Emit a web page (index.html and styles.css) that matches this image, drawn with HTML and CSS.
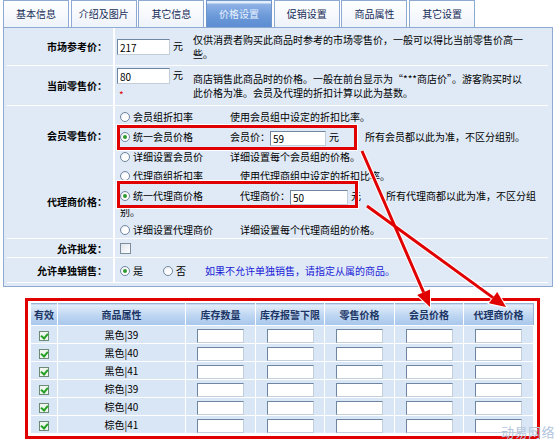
FILE: index.html
```html
<!DOCTYPE html>
<html lang="zh-CN">
<head>
<meta charset="utf-8">
<title>商品价格设置</title>
<link rel="stylesheet" href="styles.css">
</head>
<body>
<div class="page">
  <ul class="tabs">
    <li class="tab">基本信息</li>
    <li class="tab">介绍及图片</li>
    <li class="tab">其它信息</li>
    <li class="tab active">价格设置</li>
    <li class="tab">促销设置</li>
    <li class="tab">商品属性</li>
    <li class="tab">其它设置</li>
  </ul>

  <div class="panel">
    <div class="row r-market">
      <div class="lbl">市场参考价：</div>
      <div class="val">
        <div class="price"><input class="field f-main" value="217"><span class="unit">元</span></div>
        <p class="desc">仅供消费者购买此商品时参考的市场零售价，一般可以得比当前零售价高一些。</p>
      </div>
    </div>

    <div class="row r-retail">
      <div class="lbl">当前零售价：</div>
      <div class="val">
        <div class="price top">
          <div><input class="field f-main" value="80"><span class="unit">元</span></div>
          <div class="req">*</div>
        </div>
        <p class="desc">商店销售此商品时的价格。一般在前台显示为“***商店价”。游客购买时以此价格为准。会员及代理的折扣计算以此为基数。</p>
      </div>
    </div>

    <div class="row r-member">
      <div class="lbl">会员零售价：</div>
      <div class="val opts">
        <div class="opt"><span class="radio"></span><span class="opt-name w-m">会员组折扣率</span>使用会员组中设定的折扣比率。</div>
        <div class="opt unify"><span class="radio on"></span><span class="opt-name w-m">统一会员价格</span>会员价：<input class="field f-member" value="59"><span class="unit">元</span><span class="note">所有会员都以此为准，不区分组别。</span></div>
        <div class="opt"><span class="radio"></span><span class="opt-name w-m">详细设置会员价</span>详细设置每个会员组的价格。</div>
      </div>
    </div>

    <div class="row r-agent">
      <div class="lbl">代理商价格：</div>
      <div class="val opts">
        <div class="opt"><span class="radio"></span><span class="opt-name w-a">代理商组折扣率</span>使用代理商组中设定的折扣比率。</div>
        <div class="opt unify agent"><span class="radio on"></span><span class="opt-name w-a">统一代理商价格</span>代理商价：<input class="field f-agent" value="50"><span class="unit">元</span><span class="note wide">所有代理商都以此为准，不区分组别。</span></div>
        <div class="opt"><span class="radio"></span><span class="opt-name w-a">详细设置代理商价</span>详细设置每个代理商组的价格。</div>
      </div>
    </div>

    <div class="row r-wholesale">
      <div class="lbl">允许批发：</div>
      <div class="val inline"><span class="check"></span></div>
    </div>

    <div class="row r-single">
      <div class="lbl">允许单独销售：</div>
      <div class="val inline">
        <span class="choice"><span class="radio on"></span>是</span>
        <span class="choice"><span class="radio"></span>否</span>
        <span class="hint">如果不允许单独销售，请指定从属的商品。</span>
      </div>
    </div>
  </div>

  <div class="sku">
    <table class="sku-table">
      <colgroup>
        <col class="c-valid"><col class="c-attr"><col class="c-num"><col class="c-num2"><col class="c-num"><col class="c-num2"><col class="c-num">
      </colgroup>
      <thead>
        <tr><th>有效</th><th>商品属性</th><th>库存数量</th><th>库存报警下限</th><th>零售价格</th><th>会员价格</th><th>代理商价格</th></tr>
      </thead>
      <tbody>
        <tr><td><span class="check on"></span></td><td>黑色|39</td><td><input class="field cell"></td><td><input class="field cell"></td><td><input class="field cell"></td><td><input class="field cell"></td><td><input class="field cell"></td></tr>
        <tr><td><span class="check on"></span></td><td>黑色|40</td><td><input class="field cell"></td><td><input class="field cell"></td><td><input class="field cell"></td><td><input class="field cell"></td><td><input class="field cell"></td></tr>
        <tr><td><span class="check on"></span></td><td>黑色|41</td><td><input class="field cell"></td><td><input class="field cell"></td><td><input class="field cell"></td><td><input class="field cell"></td><td><input class="field cell"></td></tr>
        <tr><td><span class="check on"></span></td><td>棕色|39</td><td><input class="field cell"></td><td><input class="field cell"></td><td><input class="field cell"></td><td><input class="field cell"></td><td><input class="field cell"></td></tr>
        <tr><td><span class="check on"></span></td><td>棕色|40</td><td><input class="field cell"></td><td><input class="field cell"></td><td><input class="field cell"></td><td><input class="field cell"></td><td><input class="field cell"></td></tr>
        <tr><td><span class="check on"></span></td><td>棕色|41</td><td><input class="field cell"></td><td><input class="field cell"></td><td><input class="field cell"></td><td><input class="field cell"></td><td><input class="field cell"></td></tr>
      </tbody>
    </table>
  </div>

  <!-- callouts: red frames around the unified price options, arrows down to the matching columns -->
  <div class="mark mark-member"></div>
  <div class="mark mark-agent"></div>
  <svg class="arrows" width="556" height="439" viewBox="0 0 556 439">
    <g class="halo">
      <line x1="362" y1="151" x2="423.6" y2="292.3"/>
      <line x1="367" y1="206" x2="493" y2="297.6"/>
      <polygon points="430,307 417.2,295.1 430,289.5"/>
      <polygon points="506,307 488.9,303.3 497.2,291.9"/>
    </g>
    <g class="ink">
      <line x1="362" y1="151" x2="423.6" y2="292.3"/>
      <line x1="367" y1="206" x2="493" y2="297.6"/>
      <polygon points="430,307 417.2,295.1 430,289.5"/>
      <polygon points="506,307 488.9,303.3 497.2,291.9"/>
    </g>
  </svg>
  <div class="brand">动易网络</div>
</div>
</body>
</html>
```

FILE: styles.css
```css
* { box-sizing: border-box; }

html, body { margin: 0; padding: 0; background: #fff; }

body {
  font-family: "Noto Sans CJK SC", "Liberation Sans", sans-serif;
  font-size: 10px;
  color: #000;
}

.page {
  position: relative;
  width: 556px;
  height: 439px;
  overflow: hidden;
}

/* ---------- tab strip ---------- */
.tabs {
  display: flex;
  gap: 1.7px;
  height: 27px;
  margin: 0;
  padding: 0 0 0 3px;
  list-style: none;
}

.tab {
  width: 66px;
  height: 27px;
  border: 1px solid #8eaad2;
  border-bottom: 0;
  background: linear-gradient(#ffffff, #eef3fa);
  color: #162c58;
  text-align: center;
  line-height: 26px;
}

.tab.active {
  border-color: #7096cb;
  background: linear-gradient(#e4eefb 0, #e4eefb 2px, #8fb3e6 3px, #6a98d8 60%, #5d8dd2 100%);
  color: #e8f1ff;
}

/* ---------- form panel ---------- */
.panel {
  width: 550px;
  margin-left: 3px;
  padding: 0 4px 3px 3px;
  border: 1px solid #8eaad2;
  background: #dfeaf6;
}

.row {
  display: flex;
  border-bottom: 1px solid #fff;
}

.r-market { height: 38px; }
.r-retail { height: 40px; }
.r-member { height: 59px; border-bottom: 0; }
.r-agent { height: 74px; }
.r-wholesale { height: 19px; }
.r-single { height: 25px; }

.lbl {
  flex: none;
  width: 108px;
  display: flex;
  align-items: center;
  justify-content: flex-end;
  padding-right: 6px;
  border-right: 2px solid #fff;
  font-weight: bold;
}

.val {
  flex: 1;
  display: flex;
  align-items: center;
  padding-left: 2px;
}

.price { flex: none; }
.price.top { align-self: flex-start; margin-top: 1px; }

.unit { margin-left: 3px; }

.req {
  margin: 6px 0 0 2px;
  color: #e00000;
  line-height: 10px;
}

.desc {
  width: 336px;
  margin: 0 0 0 10px;
  line-height: 14px;
}

.field {
  height: 16px;
  margin: 0;
  padding: 0 2px;
  border: 1px solid;
  border-color: #6f86a3 #c3cedb #c3cedb #6f86a3;
  background: #fff;
  font: inherit;
  font-size: 10px;
  color: #000;
  vertical-align: middle;
}

.f-main { width: 53px; }

/* price boxes inside option lines keep the line box at its text height */
.f-member,
.f-agent {
  height: 15px;
  margin: -1px 0;
}
.f-member { width: 56px; }
.f-agent { width: 58px; }

/* radio option lists */
.opts {
  display: block;
  padding: 1px 0 0 5px;
}

.opt {
  padding: 3px 0;
  line-height: 13px;
}

.opt.unify {
  padding: 3px 0 2px;
  line-height: 15px;
}

.opt.unify.agent { padding-bottom: 1px; }

.opt-name { display: inline-block; }
.w-m { width: 97px; }
.w-a { width: 107px; }

.note { margin-left: 26px; }
.note.wide { margin-left: 25px; }

.radio {
  display: inline-block;
  position: relative;
  width: 10px;
  height: 10px;
  margin-right: 3px;
  border: 1px solid #72879f;
  border-radius: 50%;
  background: radial-gradient(circle at 60% 65%, #ffffff 40%, #dfe6ee 100%);
  vertical-align: -1px;
}

.radio.on::after {
  content: "";
  position: absolute;
  left: 2px;
  top: 2px;
  width: 4px;
  height: 4px;
  border-radius: 50%;
  background: #2f9a2f;
}

.inline { padding-left: 5px; }

.choice { margin-right: 20px; }
.choice + .choice { margin-right: 19px; }

.hint { color: #1a1ad6; }

.check {
  display: inline-block;
  position: relative;
  width: 11px;
  height: 11px;
  border: 1px solid #7d8f9f;
  background: linear-gradient(135deg, #dfe5ec, #ffffff);
}

.check.on {
  width: 10px;
  height: 10px;
  border-color: #6d8a76;
  background: #eef6ee;
  vertical-align: middle;
}

.check.on::after {
  content: "";
  position: absolute;
  left: 2px;
  top: 0;
  width: 3px;
  height: 5px;
  border: solid #24a024;
  border-width: 0 2px 2px 0;
  transform: rotate(40deg);
}

/* ---------- attribute / stock table ---------- */
.sku {
  width: 515px;
  margin: 11px 0 0 25px;
  padding: 2px 4px 2px 2px;
  border: 3px solid #e00000;
  box-shadow: 0 0 0 1px #fff;
  background: #fff;
}

.sku-table {
  width: 503px;
  table-layout: fixed;
  border-collapse: collapse;
  border: 1px solid #9ab4d6;
}

.c-valid { width: 27px; }
.c-attr { width: 128px; }
.c-num { width: 70px; }
.c-num2 { width: 69px; }

.sku-table th {
  height: 22px;
  padding: 0;
  border-left: 1px solid #fff;
  background: linear-gradient(#e4eefa, #bcd5f1 55%, #a8c7ec);
  color: #1c3565;
  font-weight: bold;
}

.sku-table td {
  height: 18px;
  padding: 0;
  border: 1px solid #fff;
  background: #d9e6f5;
  text-align: center;
}

.field.cell {
  width: 47px;
  height: 14px;
}

/* ---------- callouts ---------- */
.mark {
  position: absolute;
  border: 3px solid #e00000;
  box-shadow: 0 0 0 1px #fff;
}

.mark-member { left: 117px; top: 125px; width: 240px; height: 25px; }
.mark-agent { left: 117px; top: 181px; width: 241px; height: 27px; }

.arrows {
  position: absolute;
  left: 0;
  top: 0;
  pointer-events: none;
}

.arrows .halo line { stroke: #fff; stroke-width: 5; }
.arrows .halo polygon { fill: #fff; stroke: #fff; stroke-width: 2; }
.arrows .ink line { stroke: #e00000; stroke-width: 3; }
.arrows .ink polygon { fill: #e00000; }

.brand {
  position: absolute;
  right: 1px;
  bottom: 0;
  color: #b3c6de;
  font-size: 13px;
  line-height: 15px;
  letter-spacing: 0.5px;
}
```
